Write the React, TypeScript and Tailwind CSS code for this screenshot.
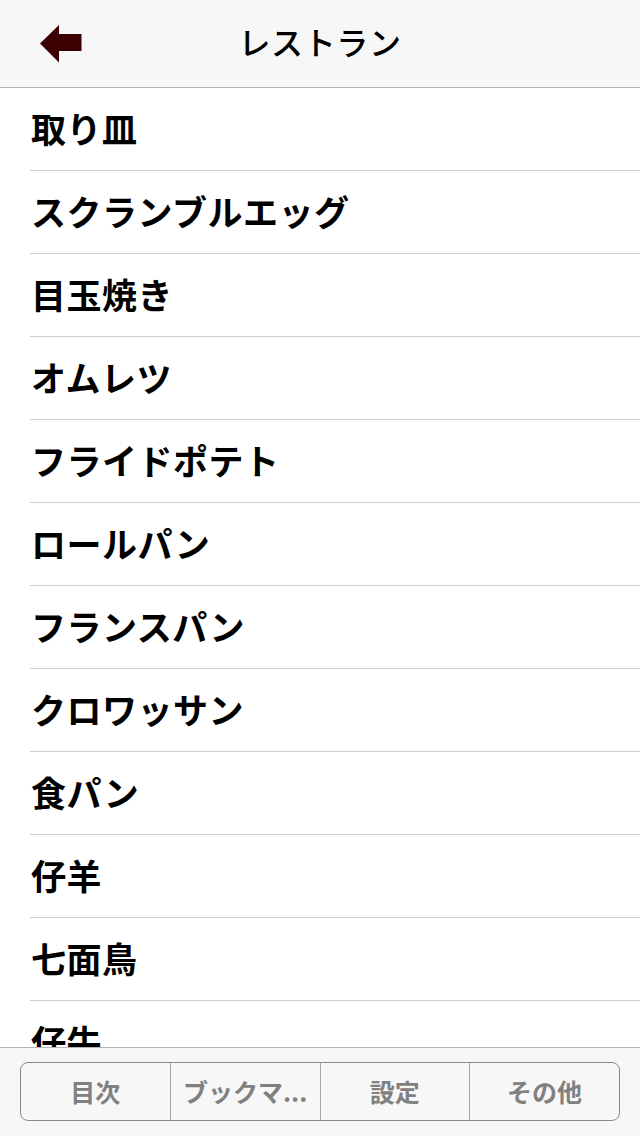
import React from "react";

const items = [
  "取り皿",
  "スクランブルエッグ",
  "目玉焼き",
  "オムレツ",
  "フライドポテト",
  "ロールパン",
  "フランスパン",
  "クロワッサン",
  "食パン",
  "仔羊",
  "七面鳥",
  "仔牛",
  "鶏肉",
];

const tabs = ["目次", "ブックマ...", "設定", "その他"];

const font = {
  fontFamily: '"Noto Sans CJK JP", "Noto Sans", sans-serif',
};

export default function App() {
  return (
    <div
      className="w-[640px] h-[1136px] flex flex-col bg-white overflow-hidden"
      style={font}
    >
      <div className="h-[88px] shrink-0 bg-[#f7f7f7] border-b border-[#b4b4b4] relative flex items-center justify-center">
        <svg
          className="absolute left-[38px] top-[23px]"
          width="46"
          height="42"
          viewBox="38 23 46 42"
        >
          <polygon
            points="40,43.5 59,25 59,34 81.5,34 81.5,51 59,51 59,62.5"
            fill="#3a0002"
          />
        </svg>
        <span className="text-[32px] font-medium text-black leading-none tracking-[0.6px] -mt-[6px]">
          レストラン
        </span>
      </div>
      <div className="flex-1 overflow-hidden">
        {items.map((t) => (
          <div key={t} className="ml-[30px] h-[83px] border-b border-[#cfcfcf] flex items-center">
            <span className="ml-[1px] -mt-[4px] text-[35px] font-bold text-black leading-none tracking-[0.5px]">
              {t}
            </span>
          </div>
        ))}
      </div>
      <div className="h-[89px] shrink-0 bg-[#f7f7f7] border-t border-[#b4b4b4] px-[20px] pt-[14px]">
        <div className="h-[59px] flex rounded-[8px] border-[1.5px] border-[#8a8a8a] overflow-hidden">
          {tabs.map((t, i) => (
            <div
              key={t}
              className={
                "flex-1 flex items-center justify-center text-[25px] font-bold text-[#808080] whitespace-nowrap " +
                (i > 0 ? "border-l border-[#a8a8a8]" : "")
              }
            >
              {t}
            </div>
          ))}
        </div>
      </div>
    </div>
  );
}
